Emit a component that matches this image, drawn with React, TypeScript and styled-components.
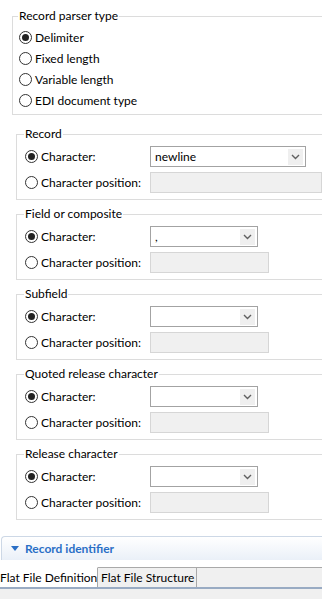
import styled, { createGlobalStyle } from 'styled-components';

const GlobalStyle = createGlobalStyle`
  html, body {
    margin: 0;
    padding: 0;
    background: #ffffff;
    overflow: hidden;
  }
  body {
    font-family: Lato, "Noto Sans", "Liberation Sans", sans-serif;
    font-size: 12px;
    color: #000000;
  }
`;

const Page = styled.div`
  width: 322px;
  height: 599px;
  overflow: hidden;
  display: flex;
  flex-direction: column;
  background: #ffffff;
`;

const Content = styled.div`
  padding: 8px 0 0 12px;
`;

const Fieldset = styled.fieldset<{ $inset: number }>`
  margin: 0;
  padding: 0 0 ${(p) => (p.$inset === 6 ? 3 : 4)}px ${(p) => p.$inset}px;
  border: 1px solid #dcdcdc;
  min-width: 0;
  width: 360px;
  box-sizing: border-box;
`;

const Legend = styled.legend`
  padding: 0 1px;
  margin-left: -1px;
  height: 16px;
  line-height: 16px;
  font-size: 12px;
`;

const RadioList = styled.div`
  display: flex;
  flex-direction: column;
  padding-top: 3px;
`;

const RadioRow = styled.label`
  display: flex;
  align-items: center;
  gap: 3px;
  height: 21px;
  white-space: nowrap;
`;

const Sections = styled.div`
  display: flex;
  flex-direction: column;
  gap: 6px;
  margin: 11px 0 0 4px;
`;

const OptionGrid = styled.div`
  display: grid;
  grid-template-columns: 125px auto;
  grid-template-rows: 25px 25px;
  row-gap: 1px;
  padding-top: 2px;
  align-items: center;
`;

const Combo = styled.div<{ $width: number }>`
  width: ${(p) => p.$width}px;
  height: 21px;
  box-sizing: border-box;
  border: 1px solid #a3a3a3;
  background: #ffffff;
  display: flex;
  align-items: center;
  padding: 0 2px 0 4px;
`;

const ComboValue = styled.span`
  flex: 1;
  white-space: nowrap;
`;

const ComboArrow = styled.span`
  width: 15px;
  height: 16px;
  background: #efefef;
  display: flex;
  align-items: center;
  justify-content: center;
`;

const TextField = styled.div<{ $width: number }>`
  width: ${(p) => p.$width}px;
  height: 21px;
  box-sizing: border-box;
  border: 1px solid #d6d6d6;
  background: #f0f0f0;
`;

const SectionHeader = styled.div`
  margin: 16px 0 0 1px;
  height: 24px;
  box-sizing: border-box;
  border-top: 1px solid #cdd8e6;
  border-left: 1px solid #cdd8e6;
  border-top-left-radius: 4px;
  background: linear-gradient(#ffffff, #eaf0f8);
  display: flex;
  align-items: center;
  gap: 6px;
  padding-left: 9px;
`;

const SectionTitle = styled.span`
  font-weight: bold;
  color: #2a6fc6;
  font-size: 12px;
`;

const TabBar = styled.div`
  margin-top: 7px;
  display: flex;
  height: 22px;
  box-sizing: border-box;
  background: #f0f0f0;
  border-bottom: 2px solid #99abc3;
`;

const Tab = styled.div<{ $active?: boolean; $width: number }>`
  width: ${(p) => p.$width}px;
  height: 20px;
  box-sizing: border-box;
  display: flex;
  align-items: center;
  white-space: nowrap;
  overflow: hidden;
  padding-left: ${(p) => (p.$active ? 0 : 3)}px;
  background: ${(p) => (p.$active ? '#ffffff' : '#f0f0f0')};
  border-top: 1px solid ${(p) => (p.$active ? '#ffffff' : '#a9a9a9')};
  border-right: 1px solid #a9a9a9;
`;

const TabFiller = styled.div`
  flex: 1;
  border-top: 1px solid #a9a9a9;
`;

const BottomFill = styled.div`
  flex: 1;
  background: #f0f0f0;
`;

const Radio = ({ checked }: { checked?: boolean }) => (
  <svg width="13" height="13" viewBox="0 0 13 13">
    <circle cx="6.5" cy="6.5" r="6" fill="#ffffff" stroke="#333333" strokeWidth="1" />
    {checked && <circle cx="6.5" cy="6.5" r="3.5" fill="#222222" />}
  </svg>
);

const Chevron = () => (
  <svg width="9" height="6" viewBox="0 0 9 6">
    <polyline points="1,1 4.5,4.5 8,1" fill="none" stroke="#606060" strokeWidth="1.4" />
  </svg>
);

const Triangle = () => (
  <svg width="8" height="5" viewBox="0 0 8 5">
    <polygon points="0,0 8,0 4,5" fill="#2a6fc6" />
  </svg>
);

type Group = {
  title: string;
  value: string;
  comboWidth: number;
  fieldWidth: number;
};

const groups: Group[] = [
  { title: 'Record', value: 'newline', comboWidth: 156, fieldWidth: 172 },
  { title: 'Field or composite', value: ',', comboWidth: 108, fieldWidth: 119 },
  { title: 'Subfield', value: '', comboWidth: 108, fieldWidth: 119 },
  { title: 'Quoted release character', value: '', comboWidth: 108, fieldWidth: 119 },
  { title: 'Release character', value: '', comboWidth: 108, fieldWidth: 119 },
];

const parserTypes = ['Delimiter', 'Fixed length', 'Variable length', 'EDI document type'];

const App = () => {
  return (
    <Page>
      <GlobalStyle />
      <Content>
        <Fieldset $inset={6}>
          <Legend>Record parser type</Legend>
          <RadioList>
            {parserTypes.map((t, i) => (
              <RadioRow key={t}>
                <Radio checked={i === 0} />
                {t}
              </RadioRow>
            ))}
          </RadioList>
        </Fieldset>

        <Sections>
          {groups.map((g) => (
            <Fieldset $inset={8} key={g.title}>
              <Legend>{g.title}</Legend>
              <OptionGrid>
                <RadioRow>
                  <Radio checked />
                  Character:
                </RadioRow>
                <Combo $width={g.comboWidth}>
                  <ComboValue>{g.value}</ComboValue>
                  <ComboArrow>
                    <Chevron />
                  </ComboArrow>
                </Combo>
                <RadioRow>
                  <Radio />
                  Character position:
                </RadioRow>
                <TextField $width={g.fieldWidth} />
              </OptionGrid>
            </Fieldset>
          ))}
        </Sections>
      </Content>

      <SectionHeader>
        <Triangle />
        <SectionTitle>Record identifier</SectionTitle>
      </SectionHeader>

      <TabBar>
        <Tab $active $width={98}>Flat File Definition</Tab>
        <Tab $width={99}>Flat File Structure</Tab>
        <TabFiller />
      </TabBar>
      <BottomFill />
    </Page>
  );
};

export default App;
